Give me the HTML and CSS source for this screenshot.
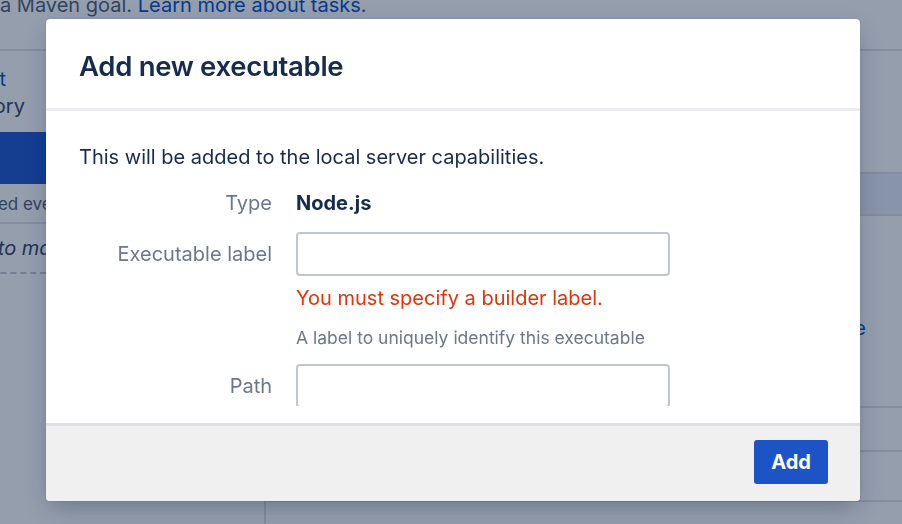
FILE: index.html
```html
<!DOCTYPE html>
<html lang="en">
<head>
<meta charset="utf-8">
<title>Add new executable</title>
<link rel="stylesheet" href="styles.css">
</head>
<body>
<div class="page">
  <div class="topline">a Maven goal. <a class="link" href="#">Learn more about tasks</a>.</div>
  <div class="columns">
    <aside class="tasks">
      <div class="task task-first">
        <div class="task-name"><a class="link" href="#">Source Code Checkout</a></div>
        <div class="task-desc">Checkout Default Repository</div>
      </div>
      <div class="task task-selected"></div>
      <div class="task task-note">Final tasks are always executed even if</div>
      <div class="task task-drop">Drag tasks here to make them final</div>
    </aside>
    <main class="config">
      <div class="block block-a"></div>
      <div class="block block-sel"></div>
      <div class="block block-b"><a class="link side-link" href="#">Add new executable</a></div>
      <div class="block block-c"></div>
      <div class="block block-d"></div>
      <div class="block block-e"></div>
    </main>
  </div>
</div>

<div class="overlay"></div>

<section class="dialog" role="dialog" aria-labelledby="dlg-title">
  <header class="dialog-header">
    <h2 id="dlg-title" class="dialog-title">Add new executable</h2>
  </header>
  <div class="dialog-body">
    <div class="dialog-scroll">
      <p class="intro">This will be added to the local server capabilities.</p>
      <form class="form">
        <div class="field-group field-static">
          <span class="field-label">Type</span>
          <span class="field-value">Node.js</span>
        </div>
        <div class="field-group">
          <label class="field-label label-input" for="exe-label">Executable label</label>
          <div class="field-cell">
            <input class="text-input" id="exe-label" type="text">
            <div class="error">You must specify a builder label.</div>
            <div class="description">A label to uniquely identify this executable</div>
          </div>
        </div>
        <div class="field-group field-path">
          <label class="field-label label-input" for="exe-path">Path</label>
          <div class="field-cell">
            <input class="text-input" id="exe-path" type="text">
          </div>
        </div>
      </form>
    </div>
  </div>
  <footer class="dialog-footer">
    <button class="btn-primary" type="button">Add</button>
  </footer>
</section>
</body>
</html>
```

FILE: styles.css
```css
* { box-sizing: border-box; }

html, body {
  margin: 0;
  padding: 0;
  width: 902px;
  height: 524px;
  overflow: hidden;
  background: #ffffff;
  font-family: Inter, "Liberation Sans", Arial, sans-serif;
  color: #172b4d;
}

.link { color: #0052cc; text-decoration: none; }

/* ---------- background page ---------- */
.page {
  width: 902px;
  height: 524px;
  overflow: hidden;
}

.topline {
  margin-top: -9px;
  height: 58px;
  font-size: 20px;
  line-height: 28px;
  color: #505f79;
  white-space: nowrap;
}

.columns {
  display: flex;
  border-top: 2px solid #dfe1e6;
  height: 480px;
}

.tasks {
  width: 266px;
  flex: none;
  border-right: 2px solid #dfe1e6;
  display: flex;
  flex-direction: column;
  overflow: hidden;
}

.task { white-space: nowrap; flex: none; }

.task-first {
  height: 81px;
  padding-top: 15px;
  font-size: 20px;
  line-height: 27px;
  color: #344563;
}
.task-first .task-name { margin-left: -213px; }
.task-first .task-desc { margin-left: -246px; }

.task-selected {
  height: 52px;
  background: #1f55cc;
}

.task-note {
  height: 40px;
  font-size: 17px;
  line-height: 40px;
  color: #505f79;
  margin-left: -236px;
  border-bottom: 2px solid #dfe1e6;
}

.task-drop {
  height: 50px;
  padding-top: 10px;
  font-size: 20px;
  line-height: 28px;
  font-style: italic;
  color: #344563;
  margin-left: -158px;
  border-bottom: 2px dashed #c1c7d0;
}

.config {
  flex: 1;
  display: flex;
  flex-direction: column;
}

.block { flex: none; }
.block-a { height: 121px; }
.block-sel {
  height: 44px;
  background: #e9eefa;
  border-top: 2px solid #dfe1e6;
  border-bottom: 2px solid #dfe1e6;
}
.block-b {
  height: 190px;
  padding-top: 98px;
  padding-right: 36px;
  text-align: right;
  font-size: 20px;
  line-height: 28px;
}
.block-c { height: 44px; border-top: 2px solid #dfe1e6; }
.block-d { height: 50px; border-top: 2px solid #dfe1e6; }
.block-e { height: 40px; border-top: 2px solid #dfe1e6; }

/* ---------- blanket ---------- */
.overlay {
  position: fixed;
  inset: 0;
  background: rgba(9, 30, 66, 0.43);
}

/* ---------- dialog ---------- */
.dialog {
  position: fixed;
  left: 46px;
  top: 19px;
  width: 814px;
  height: 482px;
  display: flex;
  flex-direction: column;
  background: #ffffff;
  border-radius: 4px;
  overflow: hidden;
  box-shadow: 0 0 1px rgba(9, 30, 66, 0.31), 0 10px 24px -4px rgba(9, 30, 66, 0.3);
}

.dialog-header {
  height: 92px;
  flex: none;
  display: flex;
  align-items: center;
  padding: 4px 33px 0;
  border-bottom: 3px solid #ebecf0;
}

.dialog-title {
  margin: 0;
  font-size: 27.5px;
  font-weight: 560;
  line-height: 34px;
  color: #172b4d;
  letter-spacing: -0.3px;
}

.dialog-body {
  flex: 1;
  padding: 0 33px 17px;
}

.dialog-scroll {
  height: 295px;
  overflow: hidden;
  padding-top: 32px;
}

.intro {
  margin: 0;
  font-size: 20px;
  line-height: 28px;
  color: #172b4d;
}

.form { margin: 0; }

.field-group {
  display: grid;
  grid-template-columns: 193px 374px;
  column-gap: 24px;
  margin-top: 15px;
}

.field-static { margin-top: 18px; }
.field-path { margin-top: 14px; }

.field-label {
  text-align: right;
  font-size: 20px;
  line-height: 28px;
  color: #6b778c;
}

.label-input { line-height: 44px; }

.field-value {
  font-size: 20px;
  line-height: 28px;
  font-weight: 700;
  color: #172b4d;
}

.field-cell { display: flex; flex-direction: column; }

.text-input {
  display: block;
  width: 374px;
  height: 44px;
  margin: 0;
  padding: 0 10px;
  border: 2px solid #c1c7d0;
  border-radius: 4px;
  background: #ffffff;
  font: inherit;
  font-size: 20px;
  outline: none;
}

.error {
  margin-top: 8px;
  font-size: 20px;
  line-height: 28px;
  color: #de350b;
}

.description {
  margin-top: 14px;
  font-size: 17.5px;
  line-height: 24px;
  color: #6b778c;
}

.dialog-footer {
  height: 78px;
  flex: none;
  display: flex;
  align-items: center;
  justify-content: flex-end;
  padding: 0 32px 3px 0;
  border-top: 3px solid #dfe1e6;
  background: #f0f0f0;
}

.btn-primary {
  width: 74px;
  height: 44px;
  margin: 0;
  padding: 0;
  border: 0;
  border-radius: 3px;
  background: #1c54c6;
  color: #ffffff;
  font-family: inherit;
  font-size: 20px;
  font-weight: 700;
  cursor: pointer;
}
```
